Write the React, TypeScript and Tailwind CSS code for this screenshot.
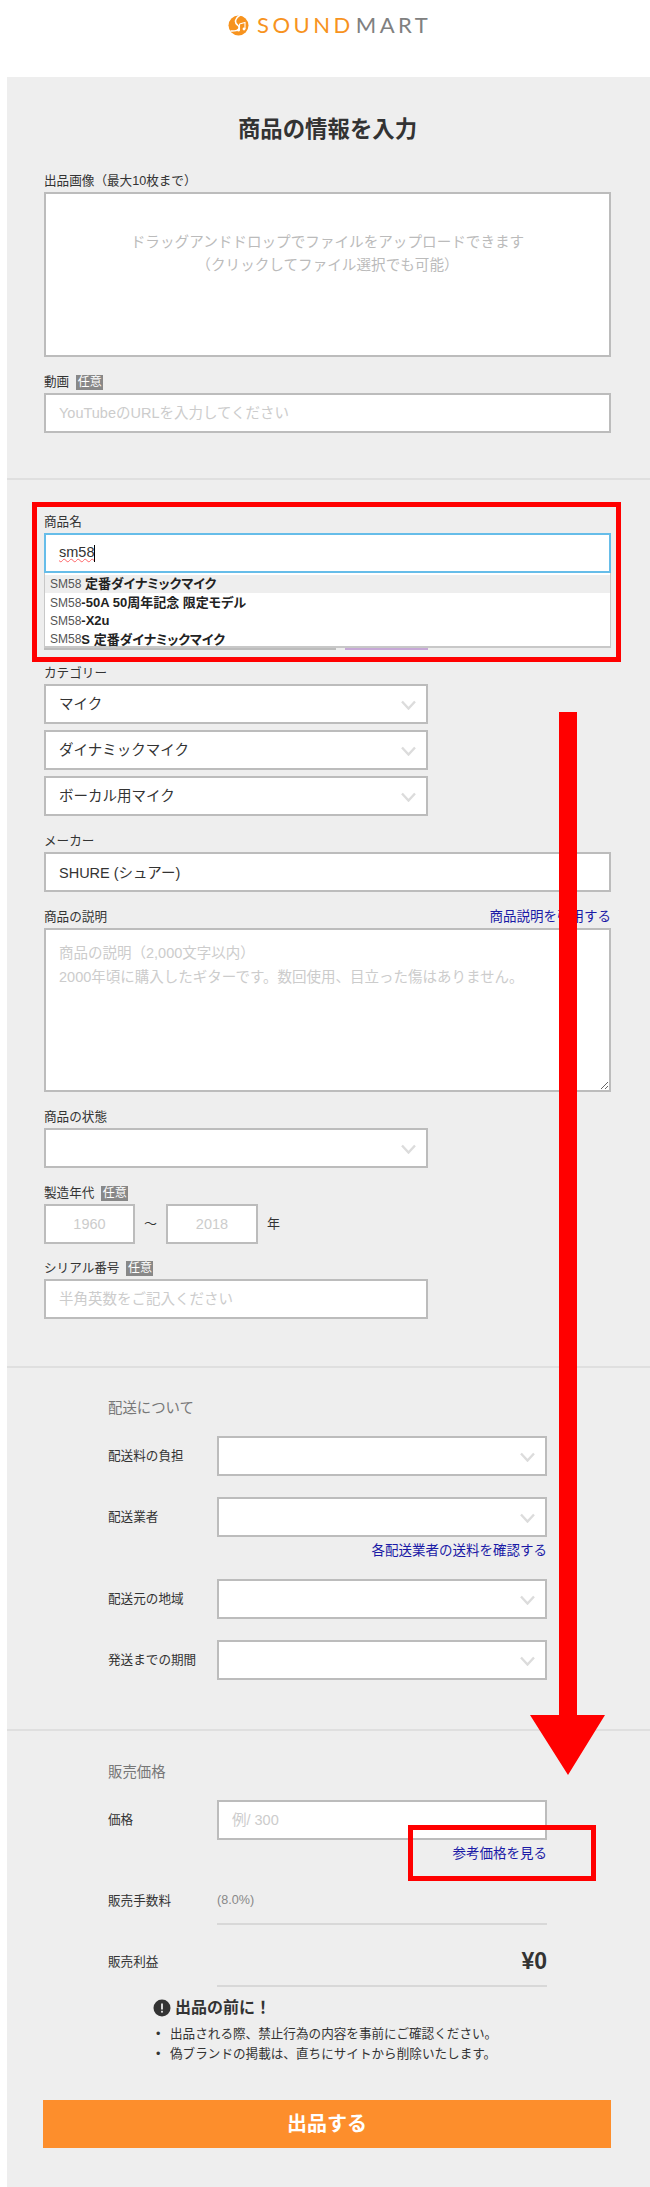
const inputClass =
  "block w-full h-10 border-2 border-[#bcbcbc] bg-white px-[13px] text-[14.5px] text-[#333] placeholder:text-[#ccc] outline-none";

function Badge() {
  return (
    <span className="ml-[7px] inline-flex h-[15px] w-[27px] items-center justify-center bg-[#888] text-[12px] leading-none text-white">
      任意
    </span>
  );
}

function Label({ text, optional }: { text: string; optional?: boolean }) {
  return (
    <div className="flex h-[22px] items-center text-[12.6px] text-[#333]">
      {text}
      {optional && <Badge />}
    </div>
  );
}

function Chevron() {
  return (
    <svg width="15" height="10" viewBox="0 0 15 10" fill="none" className="mt-[2px] shrink-0">
      <path d="M1 1.5 L7.5 8.5 L14 1.5" stroke="#dcdcdc" strokeWidth="2.4" />
    </svg>
  );
}

function Select({ value }: { value?: string }) {
  return (
    <div className="flex h-10 w-full items-center justify-between border-2 border-[#bcbcbc] bg-white pl-[13px] pr-[10px] text-[14.5px] text-[#333]">
      <span className="mt-[1px]">{value}</span>
      <Chevron />
    </div>
  );
}

function LinkRow({ text }: { text: string }) {
  return (
    <div className="mt-[3px] flex h-[22px] items-center justify-end text-[13.5px] text-[#1a1aa6]">
      {text}
    </div>
  );
}

function Row({ label, children, className }: { label: string; children: React.ReactNode; className?: string }) {
  return (
    <div className={"flex items-center " + (className ?? "")}>
      <div className="w-[109px] shrink-0 text-[12.6px] text-[#333]">{label}</div>
      <div className="min-w-0 flex-1">{children}</div>
    </div>
  );
}

const suggestions = [
  { rest: " 定番ダイナミックマイク", active: true },
  { rest: "-50A 50周年記念 限定モデル" },
  { rest: "-X2u" },
  { rest: "S 定番ダイナミックマイク" },
];

export default function App() {
  return (
    <div className="relative h-[2187px] w-[650px] overflow-hidden bg-white [font-family:'Liberation_Sans','Noto_Sans_CJK_JP',sans-serif]">
      {/* logo */}
      <div className="flex h-[77px] items-start pl-[228px] pt-[14px]">
        <div className="flex items-center">
          <svg width="21" height="21" viewBox="0 0 21 21" className="shrink-0">
            <circle cx="10.5" cy="10.5" r="10" fill="#f7931e" />
            <path d="M12.5 0 C6.5 3 6.5 8 9.5 10 C12.5 12.5 11.5 16.5 2.5 16" fill="none" stroke="#fff" strokeWidth="1.6" />
            <path d="M11.5 9 L17 7.5 V14 M11.5 9 V15" fill="none" stroke="#fff" strokeWidth="1.1" />
            <circle cx="10.5" cy="15.2" r="1.4" fill="#fff" />
            <circle cx="16" cy="14" r="1.4" fill="#fff" />
          </svg>
          <div className="ml-[8px] flex text-[22px] leading-none font-normal tracking-[3.5px] [font-family:Lato,sans-serif]">
            <span className="text-[#f7931e]">SOUND</span>
            <span className="ml-[2px] text-[#808080]">MART</span>
          </div>
        </div>
      </div>

      <div className="ml-[7px] bg-[#eeeeee]">
        {/* images */}
        <section className="border-b-2 border-[#dfdfdf] pl-[37px] pr-[39px] pt-[38px] pb-[45px]">
          <h1 className="flex h-[30px] items-center justify-center text-[22.4px] font-bold text-[#333]">
            商品の情報を入力
          </h1>
          <div className="mt-[25px]">
            <Label text="出品画像（最大10枚まで）" />
            <div className="h-[165px] border-2 border-[#bcbcbc] bg-white pt-[37px] text-center text-[14.6px] leading-[23px] text-[#bbb]">
              ドラッグアンドドロップでファイルをアップロードできます
              <br />
              （クリックしてファイル選択でも可能）
            </div>
          </div>
          <div className="mt-[14px]">
            <Label text="動画" optional />
            <input readOnly className={inputClass} placeholder="YouTubeのURLを入力してください" />
          </div>
        </section>

        {/* item details */}
        <section className="border-b-2 border-[#dfdfdf] pl-[37px] pr-[39px] pt-[31px] pb-[47px]">
          <Label text="商品名" />
          <div className="relative">
            <div className="flex h-10 items-center border-2 border-[#66bde9] bg-white px-[13px] text-[14.5px] text-[#333]">
              <span className="underline decoration-red-400 decoration-wavy decoration-1">sm58</span>
              <span className="h-[17px] w-px bg-black" />
            </div>
            <div className="absolute top-full left-0 z-10 h-[75px] w-full border-x border-b-2 border-[#c8c8c8] bg-white pt-[2px] text-[13px] text-[#222]">
              {suggestions.map((s) => (
                <div key={s.rest} className={"flex h-[18.4px] items-center whitespace-pre pl-[5px] " + (s.active ? "bg-[#eeeeee]" : "")}>
                  <span className="text-[12px] text-[#555]">SM58</span>
                  <span className="font-bold [font-feature-settings:'palt']">{s.rest}</span>
                </div>
              ))}
            </div>
          </div>
          {/* row hidden behind the suggestion list */}
          <div className="mt-[36px] flex h-[41px] gap-[9px]">
            <div className="w-[292px] border-b-2 border-[#bcbcbc]" />
            <div className="w-[83px] border-b-2 border-[#c6a8d6]" />
          </div>

          <div className="mt-[12px]">
            <Label text="カテゴリー" />
            <div className="flex w-[384px] flex-col gap-[6px]">
              <Select value="マイク" />
              <Select value="ダイナミックマイク" />
              <Select value="ボーカル用マイク" />
            </div>
          </div>
          <div className="mt-[14px]">
            <Label text="メーカー" />
            <input readOnly className={inputClass + " pb-[2px]"} value="SHURE (シュアー)" />
          </div>
          <div className="mt-[14px]">
            <div className="flex items-center justify-between">
              <Label text="商品の説明" />
              <span className="text-[13.5px] text-[#1a1aa6]">商品説明を引用する</span>
            </div>
            <textarea
              readOnly
              className="block h-[164px] w-full border-2 border-[#bcbcbc] bg-white px-[13px] pt-[11px] text-[14.5px] leading-[24px] outline-none placeholder:text-[#ccc]"
              placeholder={"商品の説明（2,000文字以内）\n2000年頃に購入したギターです。数回使用、目立った傷はありません。"}
            />
          </div>
          <div className="mt-[14px]">
            <Label text="商品の状態" />
            <div className="w-[384px]">
              <Select />
            </div>
          </div>
          <div className="mt-[14px]">
            <Label text="製造年代" optional />
            <div className="flex items-center text-[13px] text-[#333]">
              <input readOnly className="h-10 w-[91px] border-2 border-[#bcbcbc] bg-white text-center text-[14.5px] outline-none placeholder:text-[#ccc]" placeholder="1960" />
              <span className="w-[31px] text-center">～</span>
              <input readOnly className="h-10 w-[92px] border-2 border-[#bcbcbc] bg-white text-center text-[14.5px] outline-none placeholder:text-[#ccc]" placeholder="2018" />
              <span className="ml-[9px]">年</span>
            </div>
          </div>
          <div className="mt-[13px]">
            <Label text="シリアル番号" optional />
            <input readOnly className={inputClass + " !w-[384px]"} placeholder="半角英数をご記入ください" />
          </div>
        </section>

        {/* shipping */}
        <section className="border-b-2 border-[#dfdfdf] pl-[101px] pr-[103px] pt-[30px] pb-[49px]">
          <div className="flex h-[22px] items-center text-[14.4px] text-[#777]">配送について</div>
          <Row label="配送料の負担" className="mt-[16px]">
            <Select />
          </Row>
          <Row label="配送業者" className="mt-[21px]">
            <Select />
          </Row>
          <LinkRow text="各配送業者の送料を確認する" />
          <Row label="配送元の地域" className="mt-[17px]">
            <Select />
          </Row>
          <Row label="発送までの期間" className="mt-[21px]">
            <Select />
          </Row>
        </section>

        {/* price */}
        <section className="pl-[36px] pr-[39px] pt-[31px] pb-[39px]">
          <div className="pl-[65px] pr-[64px]">
            <div className="flex h-[22px] items-center text-[14.4px] text-[#777]">販売価格</div>
            <Row label="価格" className="mt-[16px]">
              <input readOnly className={inputClass} placeholder="例/ 300" />
            </Row>
            <LinkRow text="参考価格を見る" />
            <Row label="販売手数料" className="mt-[12px] h-[48px] !items-stretch [&>div:first-child]:flex [&>div:first-child]:items-center">
              <div className="flex h-full items-center border-b-2 border-[#d8d8d8] text-[12.6px] text-[#888]">(8.0%)</div>
            </Row>
            <Row label="販売利益" className="mt-[13px] h-[49px] !items-stretch [&>div:first-child]:flex [&>div:first-child]:items-center">
              <div className="flex h-full items-center justify-end border-b-2 border-[#d8d8d8] text-[23px] font-bold text-[#333]">¥0</div>
            </Row>
            <div className="ml-[45px] mt-[9px]">
              <div className="flex h-[24px] items-center gap-[4px] text-[16px] font-bold text-[#333]">
                <svg width="18" height="18" viewBox="0 0 18 18" className="shrink-0">
                  <circle cx="9" cy="9" r="8.5" fill="#333" />
                  <rect x="8.2" y="4.5" width="1.6" height="6" fill="#fff" />
                  <rect x="8.2" y="11.8" width="1.6" height="1.8" fill="#fff" />
                </svg>
                出品の前に！
              </div>
              <ul className="mt-[4px] text-[12.6px] leading-[20px] text-[#333]">
                <li className="flex">
                  <span className="w-[17px] pl-[3px] text-left">•</span>
                  <span className="whitespace-nowrap">出品される際、禁止行為の内容を事前にご確認ください。</span>
                </li>
                <li className="flex">
                  <span className="w-[17px] pl-[3px] text-left">•</span>
                  <span className="whitespace-nowrap">偽ブランドの掲載は、直ちにサイトから削除いたします。</span>
                </li>
              </ul>
            </div>
          </div>
          <button type="button" className="mt-[36px] block h-[48px] w-full bg-[#fd8e2c] text-[20px] font-bold text-white">
            出品する
          </button>
        </section>
      </div>

      {/* annotation overlays */}
      <div className="pointer-events-none absolute left-[32px] top-[502px] z-20 h-[160px] w-[589px] border-[5px] border-[#ff0000]" />
      <div className="pointer-events-none absolute left-[408px] top-[1825px] z-20 h-[56px] w-[188px] border-[5px] border-[#ff0000]" />
      <svg className="pointer-events-none absolute left-[530px] top-[712px] z-20" width="75" height="1063" viewBox="0 0 75 1063">
        <polygon points="29,0 47,0 47,1003 75,1003 38,1063 0,1003 29,1003" fill="#ff0000" />
      </svg>
    </div>
  );
}
